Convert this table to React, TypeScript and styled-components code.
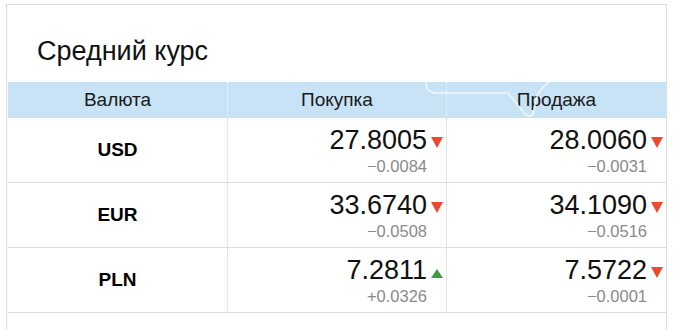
import React from 'react'
import styled, {createGlobalStyle, css} from 'styled-components'

type Trend = 'up' | 'down'

interface Rate {
    value: string
    delta: string
    trend: Trend
}

interface CurrencyRow {
    code: string
    buy: Rate
    sell: Rate
}

const rows: CurrencyRow[] = [
    {
        code: 'USD',
        buy: {value: '27.8005', delta: '\u22120.0084', trend: 'down'},
        sell: {value: '28.0060', delta: '\u22120.0031', trend: 'down'},
    },
    {
        code: 'EUR',
        buy: {value: '33.6740', delta: '\u22120.0508', trend: 'down'},
        sell: {value: '34.1090', delta: '\u22120.0516', trend: 'down'},
    },
    {
        code: 'PLN',
        buy: {value: '7.2811', delta: '+0.0326', trend: 'up'},
        sell: {value: '7.5722', delta: '\u22120.0001', trend: 'down'},
    },
]

const GlobalStyle = createGlobalStyle`
    html, body {
        margin: 0;
        background: #fff;
        overflow: hidden;
    }
    body {
        font-family: "Liberation Sans", Arial, sans-serif;
        color: #111;
    }
`

const Card = styled.section`
    box-sizing: border-box;
    width: 661px;
    height: 340px;
    margin: 4px 0 0 6px;
    padding-left: 1px;
    border: 1px solid #dcdcdc;
`

const Title = styled.h2`
    box-sizing: border-box;
    height: 77px;
    margin: 0;
    padding: 33px 0 0 29px;
    font-size: 27px;
    line-height: 27px;
    font-weight: normal;
    color: #111;
`

const columns = css`
    display: grid;
    grid-template-columns: 219px 219px 220px;
    width: 658px;
`

const Head = styled.div`
    ${columns};
    position: relative;
    height: 36px;
    overflow: hidden;
    background: #c7e3f5;
`

const HeadCell = styled.div`
    display: flex;
    align-items: center;
    justify-content: center;
    font-size: 19px;
    color: #1a1a1a;
    & + & {
        border-left: 1px dotted rgba(255, 255, 255, 0.95);
    }
`

const Bubble = styled.svg`
    position: absolute;
    left: 0;
    top: 0;
    width: 658px;
    height: 36px;
    pointer-events: none;
`

const Row = styled.div`
    ${columns};
    box-sizing: border-box;
    height: 65px;
    border-bottom: 1px solid #dedede;
`

const CodeCell = styled.div`
    display: flex;
    align-items: center;
    justify-content: center;
    font-size: 19px;
    font-weight: bold;
    color: #000;
`

const RateCell = styled.div`
    display: flex;
    flex-direction: column;
    align-items: flex-end;
    padding: 9px 3px 0 0;
    border-left: 1px dotted #d4d4d4;
`

const RateLine = styled.div`
    display: flex;
    align-items: flex-start;
`

const Value = styled.span`
    font-size: 27px;
    line-height: 27px;
    color: #111;
`

const Arrow = styled.span<{$trend: Trend}>`
    width: 0;
    height: 0;
    margin-left: 4px;
    border-left: 6px solid transparent;
    border-right: 6px solid transparent;
    ${({$trend}) =>
        $trend === 'up'
            ? css`
                  margin-top: 12px;
                  border-bottom: 9px solid #3f9b40;
              `
            : css`
                  margin-top: 10px;
                  border-top: 11px solid #ec4a2f;
              `}
`

const Delta = styled.span`
    margin-top: 4px;
    padding-right: 16px;
    font-size: 16.5px;
    line-height: 16px;
    color: #8a8a8a;
`

function RateView({rate}: {rate: Rate}) {
    return (
        <RateCell>
            <RateLine>
                <Value>{rate.value}</Value>
                <Arrow $trend={rate.trend} />
            </RateLine>
            <Delta>{rate.delta}</Delta>
        </RateCell>
    )
}

export default function App() {
    return (
        <>
            <GlobalStyle />
            <Card>
                <Title>Средний курс</Title>
                <Head>
                    <HeadCell>Валюта</HeadCell>
                    <HeadCell>Покупка</HeadCell>
                    <HeadCell>Продажа</HeadCell>
                    <Bubble viewBox="0 0 658 36">
                        <path
                            d="M418 -10 L418 1 Q418 11 429 11 L500 11 L517 32 Q521 36 525 32 L528 18 Q530 8 542 -1 L546 -6"
                            fill="none"
                            stroke="#fff"
                            strokeOpacity="0.7"
                            strokeWidth="1.6"
                            strokeLinejoin="round"
                        />
                    </Bubble>
                </Head>
                {rows.map(row => (
                    <Row key={row.code}>
                        <CodeCell>{row.code}</CodeCell>
                        <RateView rate={row.buy} />
                        <RateView rate={row.sell} />
                    </Row>
                ))}
            </Card>
        </>
    )
}
